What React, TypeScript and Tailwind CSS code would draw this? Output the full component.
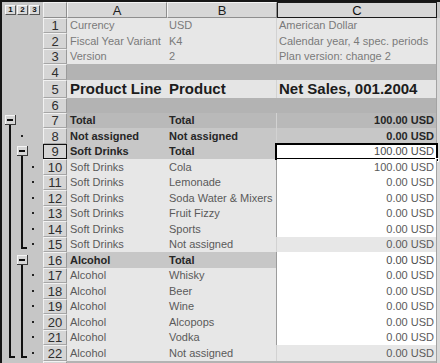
import React from "react";

type Kind = "meta" | "band" | "head" | "total" | "sub" | "group" | "item" | "tail";

type Row = {
  n: number;
  kind: Kind;
  a?: string;
  b?: string;
  c?: string;
  selected?: boolean;
  hideNumber?: boolean;
};

// outline marks drawn in the left gutter of each row
type Mark = {
  l1?: "button" | "line" | "end";
  l2?: "button" | "line" | "end";
  dot?: 1 | 2;
};

const rows: Row[] = [
  { n: 1, kind: "meta", a: "Currency", b: "USD", c: "American Dollar" },
  { n: 2, kind: "meta", a: "Fiscal Year Variant", b: "K4", c: "Calendar year, 4 spec. periods" },
  { n: 3, kind: "meta", a: "Version", b: "2", c: "Plan version: change 2" },
  { n: 4, kind: "band" },
  { n: 5, kind: "head", a: "Product Line", b: "Product", c: "Net Sales, 001.2004" },
  { n: 6, kind: "band" },
  { n: 7, kind: "total", a: "Total", b: "Total", c: "100.00 USD" },
  { n: 8, kind: "sub", a: "Not assigned", b: "Not assigned", c: "0.00 USD" },
  { n: 9, kind: "group", a: "Soft Drinks", b: "Total", c: "100.00 USD", selected: true },
  { n: 10, kind: "item", a: "Soft Drinks", b: "Cola", c: "100.00 USD" },
  { n: 11, kind: "item", a: "Soft Drinks", b: "Lemonade", c: "0.00 USD" },
  { n: 12, kind: "item", a: "Soft Drinks", b: "Soda Water & Mixers", c: "0.00 USD" },
  { n: 13, kind: "item", a: "Soft Drinks", b: "Fruit Fizzy", c: "0.00 USD" },
  { n: 14, kind: "item", a: "Soft Drinks", b: "Sports", c: "0.00 USD" },
  { n: 15, kind: "tail", a: "Soft Drinks", b: "Not assigned", c: "0.00 USD" },
  { n: 16, kind: "group", a: "Alcohol", b: "Total", c: "0.00 USD" },
  { n: 17, kind: "item", a: "Alcohol", b: "Whisky", c: "0.00 USD" },
  { n: 18, kind: "item", a: "Alcohol", b: "Beer", c: "0.00 USD" },
  { n: 19, kind: "item", a: "Alcohol", b: "Wine", c: "0.00 USD" },
  { n: 20, kind: "item", a: "Alcohol", b: "Alcopops", c: "0.00 USD" },
  { n: 21, kind: "item", a: "Alcohol", b: "Vodka", c: "0.00 USD" },
  { n: 22, kind: "tail", a: "Alcohol", b: "Not assigned", c: "0.00 USD" },
  { n: 23, kind: "band", hideNumber: true },
];

const heights: Record<number, number> = {
  1: 15, 2: 16, 3: 15, 4: 16, 5: 18, 6: 15, 7: 15, 8: 16, 9: 15, 10: 16, 11: 15, 12: 16,
  13: 15, 14: 16, 15: 15, 16: 16, 17: 15, 18: 16, 19: 15, 20: 16, 21: 15, 22: 16, 23: 15,
};

const heightClass: Record<number, string> = {
  15: "h-[15px]",
  16: "h-[16px]",
  18: "h-[18px]",
};

const marks: Record<number, Mark> = {
  7: { l1: "button" },
  8: { l1: "line", dot: 1 },
  9: { l1: "line", l2: "button" },
  10: { l1: "line", l2: "line", dot: 2 },
  11: { l1: "line", l2: "line", dot: 2 },
  12: { l1: "line", l2: "line", dot: 2 },
  13: { l1: "line", l2: "line", dot: 2 },
  14: { l1: "line", l2: "line", dot: 2 },
  15: { l1: "line", l2: "end", dot: 2 },
  16: { l1: "line", l2: "button" },
  17: { l1: "line", l2: "line", dot: 2 },
  18: { l1: "line", l2: "line", dot: 2 },
  19: { l1: "line", l2: "line", dot: 2 },
  20: { l1: "line", l2: "line", dot: 2 },
  21: { l1: "line", l2: "line", dot: 2 },
  22: { l1: "end", l2: "end", dot: 2 },
};

// x positions inside the 41px gutter
const L1_X = 7;
const L2_X = 19;

function MinusButton({ x, y }: { x: number; y: number }) {
  return (
    <g>
      <rect x={x} y={y} width={11} height={10} fill="#3a3a3a" />
      <rect x={x} y={y} width={10} height={9} fill="#f4f4f4" />
      <rect x={x + 1} y={y + 1} width={9} height={8} fill="#d6d6d6" />
      <rect x={x + 2} y={y + 4} width={6} height={2} fill="#111" />
    </g>
  );
}

function Outline({ n, h }: { n: number; h: number }) {
  const m = marks[n];
  if (!m) return <svg width={41} height={h} className="block" />;
  const mid = Math.floor(h / 2);
  const btnY = mid - 5;
  const drawLevel = (kind: "button" | "line" | "end" | undefined, lx: number) => {
    if (!kind) return null;
    if (kind === "button") {
      return (
        <g>
          <MinusButton x={lx - 4} y={btnY} />
          <rect x={lx} y={btnY + 10} width={2} height={h - btnY - 10} fill="#111" />
        </g>
      );
    }
    if (kind === "line") {
      return <rect x={lx} y={0} width={2} height={h} fill="#111" />;
    }
    return (
      <g>
        <rect x={lx} y={0} width={2} height={h - 3} fill="#111" />
        <rect x={lx} y={h - 5} width={6} height={2} fill="#111" />
      </g>
    );
  };
  const dotX = m.dot === 1 ? 19 : 30;
  return (
    <svg width={41} height={h} className="block">
      {drawLevel(m.l1, L1_X)}
      {drawLevel(m.l2, L2_X)}
      {m.dot ? <rect x={dotX} y={mid - 1} width={2} height={2} fill="#222" /> : null}
    </svg>
  );
}

function LevelButton({ label }: { label: string }) {
  return (
    <div className="w-[11px] h-[10px] bg-[#d9d9d9] border-t border-l border-t-[#f8f8f8] border-l-[#f8f8f8] border-r border-b border-r-[#555] border-b-[#555] flex items-center justify-center text-[8px] leading-none font-bold text-[#111]">
      {label}
    </div>
  );
}

const textTone: Record<Kind, string> = {
  meta: "text-[#7a7a7a] text-[11px]",
  band: "",
  head: "text-[#1c1c1c] text-[15px] font-bold",
  total: "text-[#262626] text-[11px] font-bold",
  sub: "text-[#262626] text-[11px] font-bold",
  group: "text-[#262626] text-[11px] font-bold",
  item: "text-[#5a5a5a] text-[11px]",
  tail: "text-[#5a5a5a] text-[11px]",
};

const abBg: Record<Kind, string> = {
  meta: "bg-[#e7e7e7]",
  band: "bg-[#b3b3b3]",
  head: "bg-[#e5e5e5]",
  total: "bg-[#b9b9b9]",
  sub: "bg-[#c7c7c7]",
  group: "bg-[#c7c7c7]",
  item: "bg-[#e7e7e7]",
  tail: "bg-[#e7e7e7]",
};

const cBg: Record<Kind, string> = {
  meta: "bg-[#e7e7e7]",
  band: "bg-[#b3b3b3]",
  head: "bg-[#e5e5e5]",
  total: "bg-[#b9b9b9]",
  sub: "bg-[#c7c7c7]",
  group: "bg-white",
  item: "bg-white",
  tail: "bg-[#e7e7e7]",
};

function SheetRow({ row }: { row: Row }) {
  const h = heights[row.n];
  const hc = heightClass[h];
  const tone = textTone[row.kind];
  const cTone = row.kind === "group" ? "text-[#4a4a4a] text-[11px]" : tone;
  const numeric = row.kind !== "meta" && row.kind !== "head";
  const bLine =
    row.kind === "band"
      ? "border-r border-r-transparent"
      : cBg[row.kind] === "bg-white"
        ? "border-r border-r-[#9c9c9c]"
        : "border-r border-r-[#d2d2d2]";
  return (
    <div className={`flex ${hc}`}>
      <div className="w-[41px] shrink-0 bg-[#c6c6c6]">
        <Outline n={row.n} h={h} />
      </div>
      <div
        className={`w-[24px] shrink-0 flex items-center justify-center text-[13px] leading-none text-[#2e2e2e] bg-[#d5d5d5] border-r border-b ${
          row.selected
            ? "border-r-[#111] border-b-[#111] border-t border-t-[#111] border-l border-l-[#111]"
            : "border-r-[#9a9a9a] border-b-[#a6a6a6] border-t border-t-[#f2f2f2] border-l border-l-[#f2f2f2]"
        }`}
      >
        {row.hideNumber ? null : row.n}
      </div>
      <div className={`w-[100px] shrink-0 flex items-center pl-[3px] whitespace-nowrap overflow-visible ${abBg[row.kind]} ${tone}`}>
        {row.a}
      </div>
      <div className={`w-[110px] shrink-0 flex items-center pl-[2px] whitespace-nowrap overflow-hidden ${abBg[row.kind]} ${bLine} ${tone}`}>
        {row.b}
      </div>
      <div
        className={`relative w-[160px] shrink-0 flex items-center whitespace-nowrap overflow-visible border-r border-r-[#a3a3a3] ${cBg[row.kind]} ${cTone} ${
          numeric ? "justify-end pr-[2px]" : "pl-[2px]"
        }`}
      >
        {row.c}
        {row.selected ? (
          <>
            <div className="absolute -left-[2px] -top-[1px] -right-[2px] -bottom-[1px] border-2 border-black pointer-events-none" />
            <div className="absolute -right-[3px] -bottom-[3px] w-[4px] h-[4px] bg-black border border-white" />
          </>
        ) : null}
      </div>
      <div className="flex-1 bg-[#d9d9d9]" />
    </div>
  );
}

export default function App() {
  return (
    <div className="w-[440px] h-[363px] overflow-hidden bg-[#c6c6c6] border-l-2 border-t-2 border-[#161616] font-['Liberation_Sans',Arial,sans-serif] select-none">
      {/* column header strip */}
      <div className="flex h-[16px]">
        <div className="w-[41px] shrink-0 bg-[#c6c6c6] flex items-center gap-[1px] pl-[3px]">
          <LevelButton label="1" />
          <LevelButton label="2" />
          <LevelButton label="3" />
        </div>
        <div className="w-[24px] shrink-0 bg-[#d5d5d5] border-t border-l border-t-[#f2f2f2] border-l-[#f2f2f2] border-r border-b border-r-[#8e8e8e] border-b-[#8e8e8e]" />
        <div className="w-[100px] shrink-0 bg-[#d7d7d7] flex items-center justify-center text-[13px] leading-none text-[#1e1e1e] border-t border-l border-t-[#f4f4f4] border-l-[#f4f4f4] border-r border-b border-r-[#8e8e8e] border-b-[#8e8e8e]">
          A
        </div>
        <div className="w-[110px] shrink-0 bg-[#d7d7d7] flex items-center justify-center text-[13px] leading-none text-[#1e1e1e] border-t border-l border-t-[#f4f4f4] border-l-[#f4f4f4] border-r border-b border-r-[#8e8e8e] border-b-[#8e8e8e]">
          B
        </div>
        <div className="w-[160px] shrink-0 bg-[#d7d7d7] flex items-center justify-center text-[13px] leading-none text-[#111] border border-[#1a1a1a]">
          C
        </div>
        <div className="flex-1 bg-[#c6c6c6]" />
      </div>
      {rows.map((row) => (
        <SheetRow key={row.n} row={row} />
      ))}
    </div>
  );
}
